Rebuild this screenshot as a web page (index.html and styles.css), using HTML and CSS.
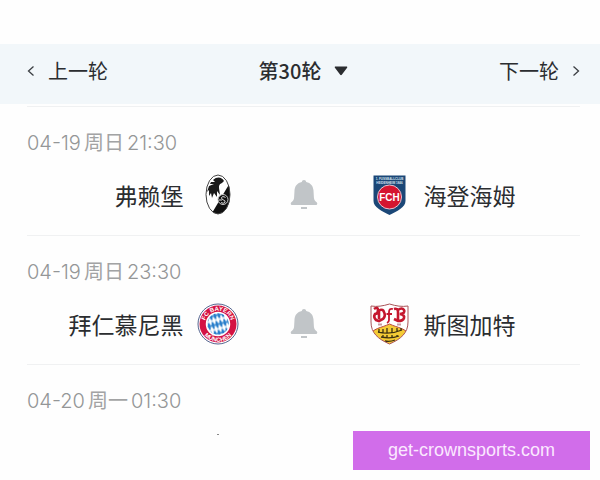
FILE: index.html
```html
<!DOCTYPE html>
<html lang="zh-CN">
<head>
    <meta charset="UTF-8">
    <meta name="viewport" content="width=device-width, initial-scale=1.0">
    <title>第30轮</title>
    <link rel="stylesheet" href="styles.css">
</head>
<body>
    <!-- Icons used more than once -->
    <svg class="icon-defs" width="0" height="0" aria-hidden="true">
        <symbol id="bell" viewBox="0 0 28 30">
            <path d="M14 0c1.300 0 2 .8 2.200 2 4.500 1 7 4 7.300 8.500l.4 7c.2 2.500 1.300 3.600 3 5 .7.600.4 2.500-.7 2.500H1.800c-1.100 0-1.400-1.900-.7-2.500 1.700-1.400 2.800-2.500 3-5l.4-7C4.800 6 7.300 3 11.800 2c.2-1.200.9-2 2.200-2z"/>
            <rect x="11" y="27" width="6" height="2"/>
        </symbol>
    </svg>

    <!-- Round Navigation -->
    <nav class="round-nav">
        <button class="round-button" type="button">
            <svg class="chevron" viewBox="0 0 8 12"><path d="M6.500 1.500 1.500 6l5 4.500"/></svg>
            上一轮
        </button>
        <button class="round-button current" type="button">
            第30轮
            <svg class="caret" viewBox="0 0 14 10"><path d="M1.500.5h11c.8 0 1 .7.600 1.200L7.800 8.800c-.5.600-1.100.6-1.600 0L.9 1.700C.5 1.200.7.500 1.500.500z"/></svg>
        </button>
        <button class="round-button next" type="button">
            下一轮
            <svg class="chevron" viewBox="0 0 8 12"><path d="M1.500 1.500 6.500 6l-5 4.500"/></svg>
        </button>
    </nav>

    <!-- Match List -->
    <main class="matches">
        <section class="match">
            <div class="match-time"><span>04-19</span><span class="weekday">周日</span><span>21:30</span></div>
            <div class="teams">
                <div class="team home">
                    <span class="team-name">弗赖堡</span>
                    <svg class="crest" viewBox="0 0 42 42" role="img" aria-label="弗赖堡">
                        <clipPath id="oval"><ellipse cx="21" cy="20.500" rx="12" ry="19.500"/></clipPath>
                        <ellipse cx="21" cy="20.500" rx="12" ry="19.500" fill="#fff"/>
                        <g clip-path="url(#oval)">
                            <path d="M34 7 15 39l8 5h14V7z" fill="#111"/>
                            <path d="M16 6c4-4 9-3 11 1l-2 2c-3 1-3 3-3 5l1 7-3-4 0 6-3-4-2 5-1-5-2 3 0-6-2 2 2-6 5-2-4 0 1-2 4 0z" fill="#1a1a1a"/>
                        </g>
                        <circle cx="26" cy="25.500" r="5" fill="#111" stroke="#ccc" stroke-width="1"/>
                        <path d="M28.500 23.500c-3-2-5 0-3.500 1.500s3.500 1 3 3-3 1-4 .5M22 26h3" fill="none" stroke="#ddd" stroke-width="1"/>
                        <ellipse cx="21" cy="20.500" rx="12" ry="19.500" fill="none" stroke="#444" stroke-width="1"/>
                    </svg>
                </div>
                <button class="remind" type="button" aria-label="提醒"><svg class="bell"><use href="#bell"/></svg></button>
                <div class="team away">
                    <svg class="crest" viewBox="0 0 42 42" role="img" aria-label="海登海姆">
                        <path d="M4.500 1.500h32V27c0 6-8 10-16 14C12.500 37 4.500 33 4.500 27z" fill="#1b4777"/>
                        <text x="20.500" y="6" class="fch-top">1. FUSSBALLCLUB</text>
                        <text x="20.500" y="10" class="fch-top">HEIDENHEIM 1846</text>
                        <circle cx="20.500" cy="23" r="12" fill="#d5152f" stroke="#e9c3cf" stroke-width="1"/>
                        <text x="20.500" y="27" class="fch-mark">FCH</text>
                    </svg>
                    <span class="team-name">海登海姆</span>
                </div>
            </div>
        </section>

        <section class="match">
            <div class="match-time"><span>04-19</span><span class="weekday">周日</span><span>23:30</span></div>
            <div class="teams">
                <div class="team home">
                    <span class="team-name">拜仁慕尼黑</span>
                    <svg class="crest" viewBox="0 0 42 42" role="img" aria-label="拜仁慕尼黑">
                        <defs>
                            <pattern id="lozenge" width="4" height="9" patternUnits="userSpaceOnUse" patternTransform="translate(1 3) rotate(-14)">
                                <rect width="4" height="9" fill="#fff"/>
                                <path d="M2 0 4 4.500 2 9 0 4.500z" fill="#2a7fcb"/>
                            </pattern>
                            <path id="arc-top" d="M7.700 21a13.300 13.300 0 0 1 26.600 0"/>
                            <path id="arc-bottom" d="M3.300 21a17.700 17.700 0 0 0 35.400 0"/>
                        </defs>
                        <circle cx="21" cy="21" r="20" fill="#fff" stroke="#55648f" stroke-width="1"/>
                        <circle cx="21" cy="21" r="18.500" fill="#d41243"/>
                        <circle cx="21" cy="21" r="11.500" fill="url(#lozenge)" stroke="#fff" stroke-width="1.500"/>
                        <text class="fcb"><textPath href="#arc-top" startOffset="50%">FC BAYERN</textPath></text>
                        <text class="fcb"><textPath href="#arc-bottom" startOffset="50%">MÜNCHEN</textPath></text>
                    </svg>
                </div>
                <button class="remind" type="button" aria-label="提醒"><svg class="bell"><use href="#bell"/></svg></button>
                <div class="team away">
                    <svg class="crest" viewBox="0 0 42 42" role="img" aria-label="斯图加特">
                        <clipPath id="shield"><path d="M2 3c6 1 12 0 18.500-2C27 3 33 4 39 3v16c0 11-7 17-18.500 22C9 36 2 30 2 19z"/></clipPath>
                        <path d="M2 3c6 1 12 0 18.500-2C27 3 33 4 39 3v16c0 11-7 17-18.500 22C9 36 2 30 2 19z" fill="#fff"/>
                        <g clip-path="url(#shield)">
                            <path d="M0 33c4-8 12-8 20.500-12C29 25 37 25 41 33v9H0z" fill="#f4cb35" stroke="#b9483c" stroke-width="1"/>
                            <g fill="none" stroke="#3c3010" stroke-width="1.300">
                                <path d="M9 29q12 3 24-2M10 29v-3M14 30v-4M18 30v-5M23 30v-5M28 29v-4M32 27v-2"/>
                                <path d="M12 34q10 2 18-1M14 34v-2M18 35v-3M23 35v-3M28 34v-2M16 38q5 1 10-1"/>
                            </g>
                        </g>
                        <g fill="none" stroke="#c5172e">
                            <path d="M5 6q4-3 4 1t-3 4q-2 3 1 6l3 1 4-2q3-3 1-7-1-3-4-2M10 6v10" stroke-width="2.600"/>
                            <path d="M24 6q-4-1-4 3v8q0 2-2 3M17.500 11H23" stroke-width="1.800"/>
                            <path d="M25 6q4-1 4 3v8M29 7q4-3 6 0t-4 4q5 1 4 4t-6 3l-4-2" stroke-width="2.600"/>
                        </g>
                        <path d="M9 21.500h4M28 21.500h4" stroke="#c79aa2" stroke-width="2"/>
                        <path d="M2 3c6 1 12 0 18.500-2C27 3 33 4 39 3v16c0 11-7 17-18.500 22C9 36 2 30 2 19z" fill="none" stroke="#a95357" stroke-width="1"/>
                    </svg>
                    <span class="team-name">斯图加特</span>
                </div>
            </div>
        </section>

        <section class="match">
            <div class="match-time"><span>04-20</span><span class="weekday">周一</span><span>01:30</span></div>
            <!-- Only the tip of the next crest shows above the fold -->
            <div class="teams cut">
                <div class="team home">
                    <svg class="crest" viewBox="0 0 42 42"><path d="M20 2.500h2" stroke="#888" stroke-width="1"/></svg>
                </div>
            </div>
        </section>
    </main>

    <a href="#" class="site-tag">get-crownsports.com</a>
</body>
</html>
```

FILE: styles.css
```css
* {
    margin: 0;
    padding: 0;
    box-sizing: border-box;
}

body {
    background-color: #fefefe;
    min-height: 100vh;
    padding-top: 44px;
    font-family: "Noto Sans CJK SC", sans-serif;
    color: #2b2d30;
}

button {
    background: none;
    border: none;
    font-family: inherit;
    color: inherit;
    cursor: pointer;
}

.icon-defs {
    position: absolute;
}

/* Round Navigation */
.round-nav {
    display: grid;
    grid-template-columns: 1fr auto 1fr;
    align-items: center;
    background-color: #f2f7fa;
    padding: 12px 20px 18px 27px;
}

.round-button {
    display: flex;
    align-items: center;
    gap: 13px;
    font-size: 20px;
    line-height: 30px;
}

.round-button.current {
    font-weight: 500;
}

.round-button.next {
    justify-self: end;
}

.chevron {
    width: 8px;
    height: 12px;
    fill: none;
    stroke: #3c3f43;
    stroke-width: 1.3;
}

.caret {
    width: 14px;
    height: 10px;
    fill: #2b2d30;
}

/* Match List */
.matches {
    padding: 2px 20px 0 27px;
}

.match {
    border-top: 1px solid #f0f1f2;
    padding: 24px 0 19px;
}

.match-time {
    display: flex;
    align-items: center;
    gap: 3px;
    margin-bottom: 19px;
    font-family: Inter, "Noto Sans CJK SC", sans-serif;
    font-size: 20px;
    font-weight: 300;
    line-height: 24px;
    color: #949697;
}

.weekday {
    font-weight: 400;
    color: #a2a3a4;
}

.teams {
    display: grid;
    grid-template-columns: 1fr auto 1fr;
    align-items: center;
    gap: 51px;
}

.teams.cut {
    height: 3px;
    align-items: start;
    grid-template-columns: 1fr 28px 1fr;
    overflow: hidden;
}

.team {
    display: flex;
    align-items: center;
    gap: 13px;
}

.team.home {
    justify-content: flex-end;
}

.team-name {
    font-size: 23px;
    line-height: 34px;
    white-space: nowrap;
}

.crest {
    width: 42px;
    height: 42px;
}

.remind {
    display: flex;
}

.bell {
    width: 28px;
    height: 30px;
    fill: #c1c5c8;
}

/* Lettering on the crests */
.fch-top {
    font: bold 3px "Liberation Sans", sans-serif;
    text-anchor: middle;
    fill: #d5e0ec;
}

.fch-mark {
    font: bold 10px "Liberation Sans", sans-serif;
    text-anchor: middle;
    fill: #fff;
}

.fcb {
    font: bold 6px "Liberation Sans", sans-serif;
    text-anchor: middle;
    fill: #fff;
}

/* Site Tag */
.site-tag {
    position: fixed;
    right: 10px;
    bottom: 10px;
    padding: 8px 35px 9px;
    background-color: #d16dea;
    color: #fbe9ff;
    font-family: "Liberation Sans", sans-serif;
    font-size: 18px;
    line-height: 22px;
    text-decoration: none;
}
```
